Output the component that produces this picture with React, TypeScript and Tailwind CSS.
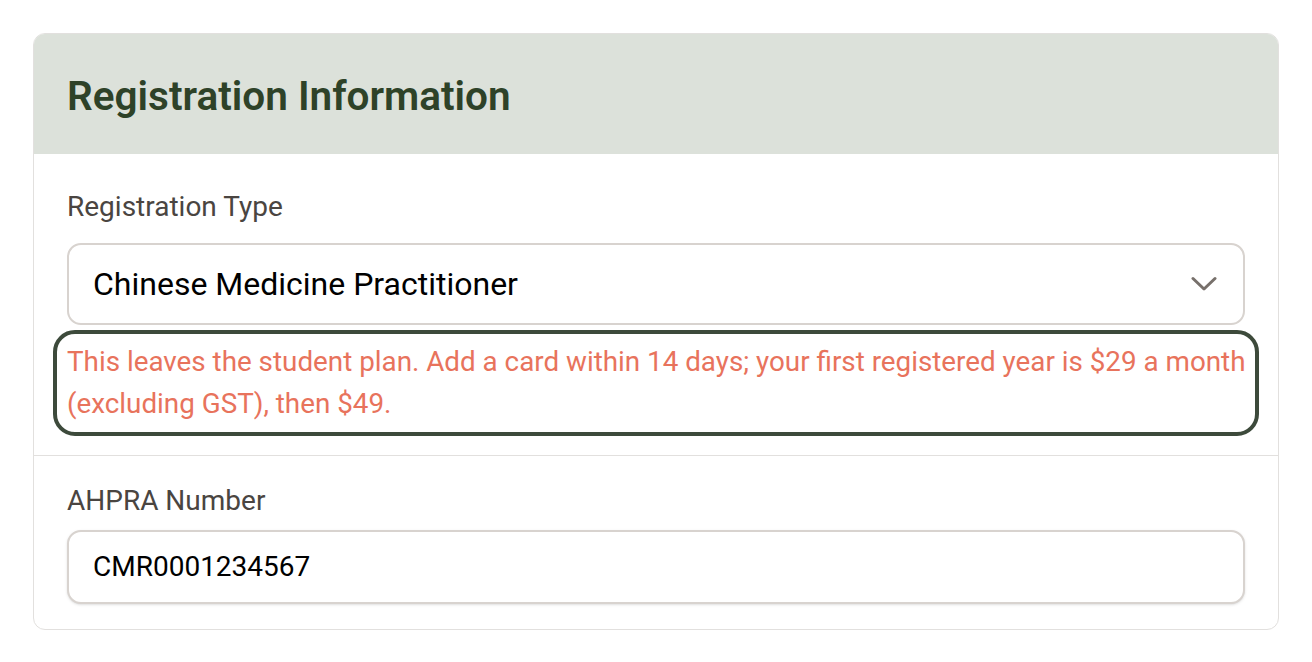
const font = { fontFamily: "Roboto, 'Noto Sans', sans-serif" };

function Chevron() {
  return (
    <svg width="26" height="16" viewBox="0 0 26 16" fill="none" className="shrink-0">
      <polyline points="2,2.5 13,13 24,2.5" stroke="#77706b" strokeWidth="3" strokeLinecap="round" strokeLinejoin="round" />
    </svg>
  );
}

export default function App() {
  return (
    <main className="min-h-screen bg-white p-[33px]" style={font}>
      <section className="overflow-hidden rounded-[12px] border border-[#e2e0de] bg-white">
        <header className="flex h-[120px] items-center bg-[#dce1da] px-[33px]">
          <h2 className="pt-[4px] text-[40.5px] font-semibold leading-none text-[#2e4228]">Registration Information</h2>
        </header>

        <div className="border-b border-[#e2e0de] px-[33px] pt-[33px] pb-[19px]">
          <label className="block text-[28px] leading-[40px] text-[#4a4541]">Registration Type</label>
          <div className="mt-[16px] flex h-[82px] items-center justify-between rounded-[14px] border-2 border-[#d8d3cf] bg-white pl-[24px] pr-[26px]">
            <span className="text-[32px] text-black">Chinese Medicine Practitioner</span>
            <Chevron />
          </div>
          <div className="-mx-[14px] mt-[5px] rounded-[22px] border-4 border-[#3d4a3b] py-[7px] pl-[10px] pr-[2px]">
            <p className="text-[27.8px] leading-[42px] text-[#e8735c]">
              This leaves the student plan. Add a card within 14 days; your first registered year is $29 a month (excluding GST), then $49.
            </p>
          </div>
        </div>

        <div className="px-[33px] pt-[25px] pb-[25px]">
          <label className="block text-[28px] leading-[40px] text-[#4a4541]">AHPRA Number</label>
          <div className="mt-[9px] flex h-[74px] items-center rounded-[14px] border-2 border-[#d8d3cf] bg-white px-[24px] shadow-sm">
            <span className="text-[28px] text-black">CMR0001234567</span>
          </div>
        </div>
      </section>
    </main>
  );
}
